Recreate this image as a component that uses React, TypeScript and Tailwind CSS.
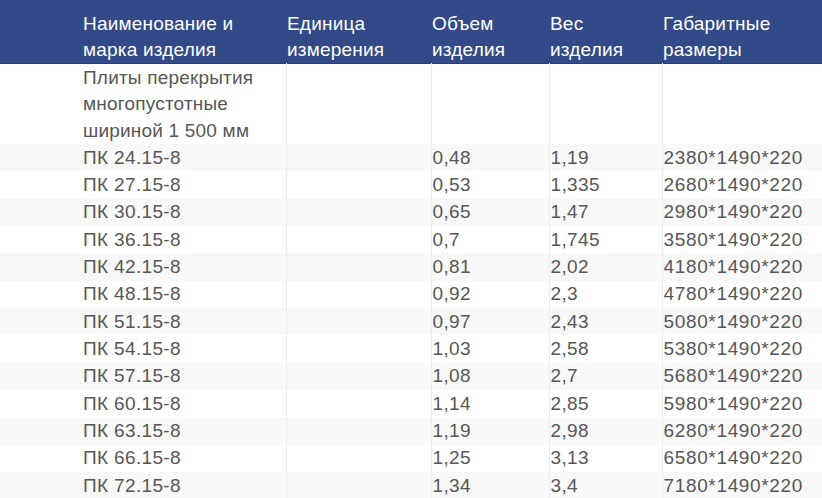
const ROWS: [string, string, string, string][] = [
  ["ПК 24.15-8", "0,48", "1,19", "2380*1490*220"],
  ["ПК 27.15-8", "0,53", "1,335", "2680*1490*220"],
  ["ПК 30.15-8", "0,65", "1,47", "2980*1490*220"],
  ["ПК 36.15-8", "0,7", "1,745", "3580*1490*220"],
  ["ПК 42.15-8", "0,81", "2,02", "4180*1490*220"],
  ["ПК 48.15-8", "0,92", "2,3", "4780*1490*220"],
  ["ПК 51.15-8", "0,97", "2,43", "5080*1490*220"],
  ["ПК 54.15-8", "1,03", "2,58", "5380*1490*220"],
  ["ПК 57.15-8", "1,08", "2,7", "5680*1490*220"],
  ["ПК 60.15-8", "1,14", "2,85", "5980*1490*220"],
  ["ПК 63.15-8", "1,19", "2,98", "6280*1490*220"],
  ["ПК 66.15-8", "1,25", "3,13", "6580*1490*220"],
  ["ПК 72.15-8", "1,34", "3,4", "7180*1490*220"],
];

const HEAD = [
  ["Наименование и", "марка изделия"],
  ["Единица", "измерения"],
  ["Объем", "изделия"],
  ["Вес", "изделия"],
  ["Габаритные", "размеры"],
];

const cell = "border-l border-[#ececec] pl-[1px] align-middle";

export default function App() {
  return (
    <div className="w-[822px] h-[498px] overflow-hidden bg-white text-[19px] text-[#575757] font-['Liberation_Sans',Arial,sans-serif]">
      <table className="w-full table-fixed border-collapse">
        <colgroup>
          <col className="w-[286px]" />
          <col className="w-[145px]" />
          <col className="w-[118px]" />
          <col className="w-[113px]" />
          <col />
        </colgroup>
        <thead>
          <tr className="h-[63px] bg-[#324a87] text-white border-b border-[#2a3f75]">
            {HEAD.map((h, i) => (
              <th
                key={i}
                className={`text-left font-normal align-bottom pb-0 leading-[26px] tracking-[0.2px] ${i === 0 ? "pl-[83px]" : "pl-[1px]"}`}
              >
                {h[0]}
                <br />
                {h[1]}
              </th>
            ))}
          </tr>
        </thead>
        <tbody className="tracking-[0.35px]">
          <tr className="h-[81px]">
            <td className="pl-[83px] align-top pt-[1px] leading-[26.5px] tracking-[0.2px]">
              Плиты перекрытия
              <br />
              многопустотные
              <br />
              шириной 1 500 мм
            </td>
            <td className={cell}></td>
            <td className={cell}></td>
            <td className={cell}></td>
            <td className={cell}></td>
          </tr>
          {ROWS.map((r, i) => (
            <tr key={r[0]} className={`h-[27.33px] leading-[22px] ${i % 2 === 0 ? "bg-[#f8f8f8]" : "bg-white"}`}>
              <td className="pl-[83px] align-middle">{r[0]}</td>
              <td className={cell}></td>
              <td className={cell}>{r[1]}</td>
              <td className={cell}>{r[2]}</td>
              <td className={`${cell} tracking-[0.65px]`}>{r[3]}</td>
            </tr>
          ))}
        </tbody>
      </table>
    </div>
  );
}
